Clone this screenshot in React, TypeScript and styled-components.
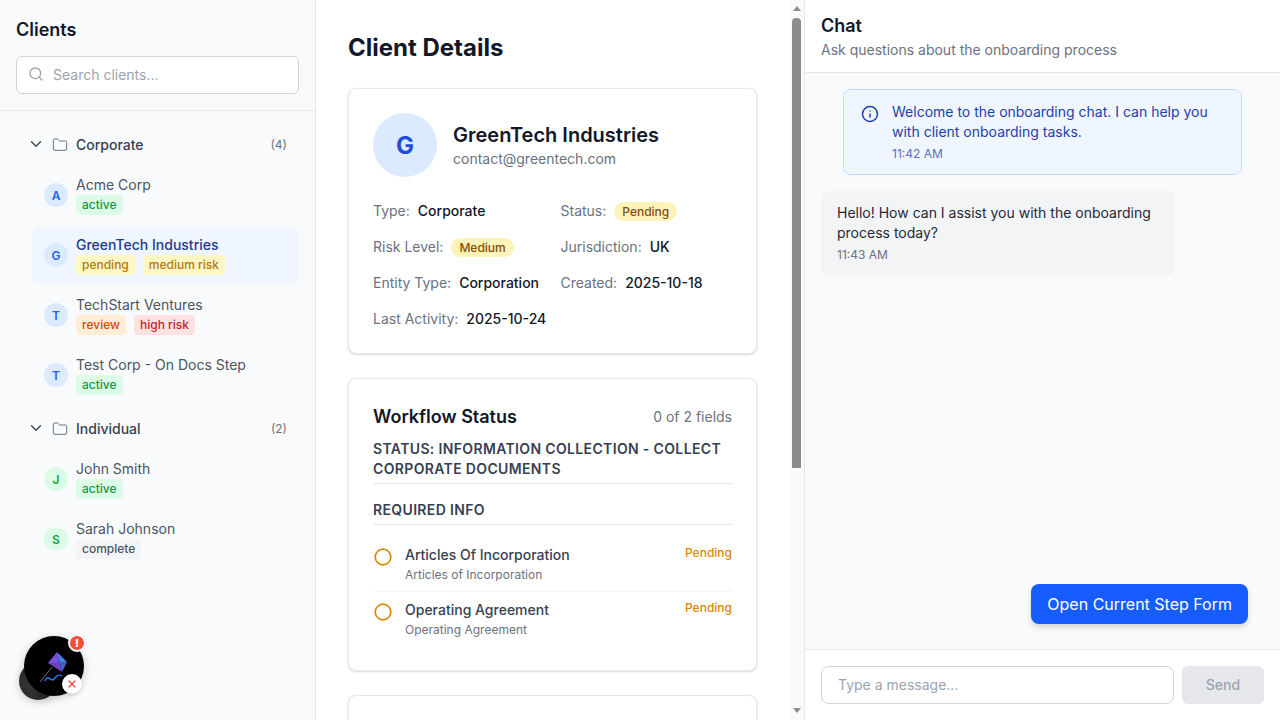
import styled, { createGlobalStyle } from 'styled-components';
import { ChevronDown, Folder, Info, Search, X } from 'lucide-react';

const GlobalStyle = createGlobalStyle`
  html, body {
    margin: 0;
    height: 100%;
    overflow: hidden;
  }
  body {
    font-family: Inter, "Liberation Sans", sans-serif;
    color: #111827;
    background: #fff;
  }
  * {
    box-sizing: border-box;
  }
`;

type Tone = 'green' | 'yellow' | 'orange' | 'red' | 'gray';

const tones: Record<Tone, { bg: string; fg: string }> = {
  green: { bg: '#dcfce7', fg: '#16963f' },
  yellow: { bg: '#fef7c3', fg: '#b4780f' },
  orange: { bg: '#ffedd5', fg: '#d9480f' },
  red: { bg: '#fee2e2', fg: '#c81e2e' },
  gray: { bg: '#f3f4f6', fg: '#4b5563' },
};

const Layout = styled.div`
  display: flex;
  width: 1280px;
  height: 720px;
  overflow: hidden;
`;

const Sidebar = styled.aside`
  position: relative;
  flex: 0 0 316px;
  background: #f9fafb;
  border-right: 1px solid #e5e7eb;
`;

const SidebarHead = styled.div`
  height: 111px;
  padding: 16px 16px 0;
  border-bottom: 1px solid #e5e7eb;
`;

const SidebarTitle = styled.h2`
  margin: 0 0 12px;
  font-size: 18px;
  line-height: 28px;
  font-weight: 600;
  color: #111827;
`;

const SearchBox = styled.div`
  display: flex;
  align-items: center;
  gap: 9px;
  height: 38px;
  width: 283px;
  padding: 0 11px 2px;
  background: #fff;
  border: 1px solid #d1d5db;
  border-radius: 6px;
  color: #9ca3af;
`;

const SearchInput = styled.input`
  flex: 1;
  min-width: 0;
  border: 0;
  outline: 0;
  padding: 0;
  background: transparent;
  font: 400 14px Inter, sans-serif;
  color: #111827;

  &::placeholder {
    color: #9ca3af;
    opacity: 1;
  }
`;

const Tree = styled.div`
  padding: 16px 16px 0;
`;

const Group = styled.section`
  margin-bottom: 8px;
`;

const GroupHead = styled.div`
  display: flex;
  align-items: center;
  height: 36px;
  margin-bottom: 4px;
  padding: 0 12px 2px 11px;
  color: #374151;
`;

const GroupName = styled.span`
  flex: 1;
  margin-left: 8px;
  font-size: 14px;
  font-weight: 500;
`;

const FolderIcon = styled(Folder)`
  margin: 2px 0 0 7px;
  color: #6b7280;
`;

const GroupCount = styled.span`
  font-size: 12px;
  color: #6b7280;
`;

const ClientRow = styled.div<{ $selected?: boolean }>`
  display: flex;
  align-items: center;
  gap: 8px;
  height: 56px;
  margin: 0 0 4px 16px;
  padding: 0 12px;
  border-radius: 6px;
  background: ${(p) => (p.$selected ? '#eff6ff' : 'transparent')};
`;

const Initial = styled.div<{ $green?: boolean }>`
  flex: 0 0 24px;
  display: flex;
  align-items: center;
  justify-content: center;
  height: 24px;
  border-radius: 50%;
  font-size: 12px;
  font-weight: 600;
  background: ${(p) => (p.$green ? '#dcfce7' : '#dbeafe')};
  color: ${(p) => (p.$green ? '#16a34a' : '#2563eb')};
`;

const ClientName = styled.div<{ $selected?: boolean }>`
  font-size: 14px;
  line-height: 20px;
  color: ${(p) => (p.$selected ? '#1e3a8a' : '#4b5563')};
  font-weight: ${(p) => (p.$selected ? 500 : 400)};
`;

const Tags = styled.div`
  display: flex;
  gap: 8px;
`;

const Tag = styled.span<{ $tone: Tone }>`
  height: 20px;
  padding: 0 6px;
  border-radius: 4px;
  font-size: 12px;
  line-height: 20px;
  font-weight: 500;
  background: ${(p) => tones[p.$tone].bg};
  color: ${(p) => tones[p.$tone].fg};
`;

const Widget = styled.div`
  position: absolute;
  left: 19px;
  top: 636px;
  width: 66px;
  height: 66px;
`;

const WidgetBack = styled.div`
  position: absolute;
  left: 0;
  bottom: 2px;
  width: 38px;
  height: 38px;
  border-radius: 50%;
  background: radial-gradient(circle at 35% 60%, #3a3a3a, #222 75%);
  box-shadow: 0 2px 8px rgba(0, 0, 0, 0.2);
`;

const WidgetFront = styled.div`
  position: absolute;
  left: 5px;
  top: 0;
  width: 60px;
  height: 60px;
  border-radius: 50%;
  background: #000;
  box-shadow: 0 2px 10px rgba(0, 0, 0, 0.2);
`;

const KiteDrawing = styled.svg`
  display: block;
`;

const AlertDot = styled.div`
  position: absolute;
  left: 49px;
  top: -2px;
  display: flex;
  align-items: center;
  justify-content: center;
  width: 18px;
  height: 18px;
  border-radius: 50%;
  border: 2px solid #fff;
  background: #f0513c;
  color: #fff;
  font-size: 11px;
  line-height: 1;
  font-weight: 800;
`;

const CloseDot = styled.div`
  position: absolute;
  left: 43px;
  top: 38px;
  display: flex;
  align-items: center;
  justify-content: center;
  width: 20px;
  height: 20px;
  border-radius: 50%;
  background: #fff;
  color: #ef4444;
  box-shadow: 0 1px 3px rgba(0, 0, 0, 0.2);
`;

const Main = styled.main`
  flex: 0 0 488px;
  display: flex;
  height: 720px;
  background: #fff;
`;

const MainScroll = styled.div`
  flex: 1;
  min-width: 0;
  padding: 32px;
  overflow: hidden;
`;

const ScrollRail = styled.div`
  flex: 0 0 15px;
  display: flex;
  flex-direction: column;
  align-items: center;
  padding: 6px 0 7px;
  background: #fafafa;
`;

const RailArrow = styled.div<{ $down?: boolean }>`
  width: 0;
  height: 0;
  border-left: 4.5px solid transparent;
  border-right: 4.5px solid transparent;
  border-bottom: ${(p) => (p.$down ? '0' : '5px solid #8c8c8c')};
  border-top: ${(p) => (p.$down ? '5px solid #8c8c8c' : '0')};
`;

const RailTrack = styled.div`
  flex: 1;
  padding-top: 7px;
`;

const RailThumb = styled.div`
  width: 9px;
  height: 450px;
  border-radius: 4px 4px 0 0;
  background: #8c8c8c;
`;

const PageTitle = styled.h1`
  margin: 0 0 24px;
  font-size: 24px;
  line-height: 32px;
  font-weight: 700;
  color: #111827;
`;

const Card = styled.div<{ $tall?: boolean }>`
  width: 409px;
  margin-bottom: 24px;
  padding: 24px;
  min-height: ${(p) => (p.$tall ? '330px' : '0')};
  background: #fff;
  border: 1px solid #e5e7eb;
  border-radius: 8px;
  box-shadow: 0 1px 3px rgba(0, 0, 0, 0.1), 0 1px 2px rgba(0, 0, 0, 0.06);
`;

const ClientHead = styled.div`
  display: flex;
  align-items: center;
  gap: 16px;
  margin-bottom: 24px;
`;

const BigInitial = styled.div`
  display: flex;
  align-items: center;
  justify-content: center;
  width: 64px;
  height: 64px;
  border-radius: 50%;
  background: #dbeafe;
  color: #1d4ed8;
  font-size: 24px;
  font-weight: 700;
`;

const ClientTitle = styled.div`
  margin-top: 1px;
  font-size: 20px;
  line-height: 27px;
  font-weight: 600;
  color: #111827;
`;

const ClientEmail = styled.div`
  font-size: 14px;
  line-height: 20px;
  color: #6b7280;
`;

const Fields = styled.div`
  display: grid;
  grid-template-columns: 171.5px 1fr;
  gap: 16px;
`;

const Field = styled.div`
  display: flex;
  align-items: center;
  gap: 8px;
  height: 20px;
  font-size: 14px;
  line-height: 20px;
  white-space: nowrap;
`;

const FieldLabel = styled.span`
  color: #6b7280;
`;

const FieldValue = styled.span`
  font-weight: 500;
  color: #111827;
`;

const Pill = styled.span`
  height: 19px;
  padding: 0 8px;
  border-radius: 10px;
  background: #fef3b8;
  color: #854d0e;
  font-size: 12px;
  line-height: 19px;
  font-weight: 500;
`;

const WorkflowHead = styled.div`
  display: flex;
  align-items: center;
  justify-content: space-between;
  margin-bottom: 8px;
`;

const WorkflowTitle = styled.h3`
  margin: 0;
  font-size: 18px;
  line-height: 28px;
  font-weight: 600;
  color: #111827;
`;

const FieldCount = styled.span`
  font-size: 14px;
  line-height: 20px;
  color: #6b7280;
`;

const SectionLabel = styled.div`
  padding-bottom: 4px;
  border-bottom: 1px solid #e5e7eb;
  font-size: 14px;
  line-height: 20px;
  font-weight: 600;
  color: #374151;
  letter-spacing: 0.35px;
  text-transform: uppercase;
`;

const RequiredLabel = styled(SectionLabel)`
  margin-top: 16px;
  margin-bottom: 12px;
`;

const Requirement = styled.div<{ $last?: boolean }>`
  display: flex;
  align-items: flex-start;
  gap: 12px;
  padding: 8px 0 6px;
  border-bottom: ${(p) => (p.$last ? '0' : '1px solid #f3f4f6')};
`;

const PendingRing = styled.div`
  flex: 0 0 20px;
  height: 20px;
  margin-top: 2px;
  border-radius: 50%;
`;

const RequirementText = styled.div`
  flex: 1;
`;

const RequirementName = styled.div`
  font-size: 14px;
  line-height: 20px;
  font-weight: 500;
  color: #374151;
`;

const RequirementNote = styled.div`
  font-size: 12px;
  line-height: 20px;
  color: #6b7280;
`;

const RequirementState = styled.span`
  font-size: 12px;
  line-height: 16px;
  font-weight: 500;
  color: #d68a06;
`;

const Chat = styled.section`
  position: relative;
  flex: 1;
  display: flex;
  flex-direction: column;
  height: 720px;
  background: #fff;
  border-left: 1px solid #e5e7eb;
`;

const ChatHead = styled.header`
  height: 73px;
  padding: 12px 16px 0;
  border-bottom: 1px solid #e5e7eb;
`;

const ChatTitle = styled.h2`
  margin: 0;
  font-size: 18px;
  line-height: 28px;
  font-weight: 600;
  color: #111827;
`;

const ChatSub = styled.p`
  margin: 0;
  font-size: 14px;
  line-height: 20px;
  color: #6b7280;
`;

const Messages = styled.div`
  flex: 1;
  display: flex;
  flex-direction: column;
  gap: 16px;
  padding: 16px;
  background: #f9fafb;
`;

const SystemMessage = styled.div`
  display: flex;
  gap: 13px;
  align-self: center;
  width: 399px;
  padding: 12px 16px 12px 17px;
  background: #eff6ff;
  border: 1px solid #bfdbfe;
  border-radius: 8px;
  color: #1e40af;
`;

const SystemIcon = styled(Info)`
  flex: 0 0 18px;
  margin-top: 3px;
  color: #1e40af;
`;

const MessageText = styled.div`
  font-size: 14px;
  line-height: 20px;
`;

const MessageTime = styled.div<{ $tint: string }>`
  margin-top: 4px;
  font-size: 12px;
  line-height: 16px;
  color: ${(p) => p.$tint};
`;

const Bubble = styled.div`
  width: 354px;
  padding: 12px 16px;
  background: #f3f4f6;
  border-radius: 8px;
  color: #1f2937;
`;

const FormButton = styled.button`
  position: absolute;
  right: 32px;
  top: 584px;
  height: 40px;
  padding: 0 16px;
  border: 0;
  border-radius: 8px;
  background: #175cff;
  color: #fff;
  font: 400 16px Inter, sans-serif;
  box-shadow: 0 4px 6px rgba(0, 0, 0, 0.1), 0 2px 4px rgba(0, 0, 0, 0.06);
`;

const Composer = styled.footer`
  display: flex;
  gap: 8px;
  height: 71px;
  padding: 16px;
  background: #fff;
  border-top: 1px solid #e5e7eb;
`;

const MessageInput = styled.input`
  flex: 1;
  min-width: 0;
  height: 38px;
  padding: 0 16px 2px;
  border: 1px solid #d1d5db;
  border-radius: 8px;
  outline: 0;
  font: 400 14px Inter, sans-serif;

  &::placeholder {
    color: #9ca3af;
    opacity: 1;
  }
`;

const SendButton = styled.button`
  width: 82px;
  height: 38px;
  padding: 0 0 2px;
  border: 0;
  border-radius: 6px;
  background: #e5e7eb;
  color: #9ca3af;
  font: 500 14px Inter, sans-serif;
`;

interface ClientItem {
  name: string;
  green?: boolean;
  selected?: boolean;
  tags: { label: string; tone: Tone }[];
}

const corporate: ClientItem[] = [
  { name: 'Acme Corp', tags: [{ label: 'active', tone: 'green' }] },
  {
    name: 'GreenTech Industries',
    selected: true,
    tags: [
      { label: 'pending', tone: 'yellow' },
      { label: 'medium risk', tone: 'yellow' },
    ],
  },
  {
    name: 'TechStart Ventures',
    tags: [
      { label: 'review', tone: 'orange' },
      { label: 'high risk', tone: 'red' },
    ],
  },
  { name: 'Test Corp - On Docs Step', tags: [{ label: 'active', tone: 'green' }] },
];

const individual: ClientItem[] = [
  { name: 'John Smith', green: true, tags: [{ label: 'active', tone: 'green' }] },
  { name: 'Sarah Johnson', green: true, tags: [{ label: 'complete', tone: 'gray' }] },
];

const ClientList = ({ title, items }: { title: string; items: ClientItem[] }) => (
  <Group>
    <GroupHead>
      <ChevronDown size={18} strokeWidth={1.75} />
      <FolderIcon size={16} strokeWidth={1.5} />
      <GroupName>{title}</GroupName>
      <GroupCount>({items.length})</GroupCount>
    </GroupHead>
    {items.map((client) => (
      <ClientRow key={client.name} $selected={client.selected}>
        <Initial $green={client.green}>{client.name[0]}</Initial>
        <div>
          <ClientName $selected={client.selected}>{client.name}</ClientName>
          <Tags>
            {client.tags.map((tag) => (
              <Tag key={tag.label} $tone={tag.tone}>
                {tag.label}
              </Tag>
            ))}
          </Tags>
        </div>
      </ClientRow>
    ))}
  </Group>
);

const Kite = () => (
  <KiteDrawing width="60" height="60" viewBox="0 0 60 60">
    <path d="M33 16 L43 26 L36 27 Z" fill="#3b8ae0" />
    <path d="M33 16 L24 27 L36 27 Z" fill="#7c4ddb" />
    <path d="M24 27 L38 36 L36 27 Z" fill="#6a3fc0" />
    <path d="M43 26 L38 36 L36 27 Z" fill="#4a60d0" />
    <path d="M28 31 L16 46" stroke="#8a8a8a" strokeWidth="0.8" fill="none" />
    <path d="M21 45 C24 37 27 47 30 43 S35 38 38 40" stroke="#1c7ff0" strokeWidth="1.5" fill="none" />
  </KiteDrawing>
);

const RequirementItem = ({ name, note, last }: { name: string; note: string; last?: boolean }) => (
  <Requirement $last={last}>
    <PendingRing>
      <svg width="20" height="20" viewBox="0 0 20 20">
        <circle cx="10" cy="10" r="7.8" fill="none" stroke="#d68a06" strokeWidth="1.7" />
      </svg>
    </PendingRing>
    <RequirementText>
      <RequirementName>{name}</RequirementName>
      <RequirementNote>{note}</RequirementNote>
    </RequirementText>
    <RequirementState>Pending</RequirementState>
  </Requirement>
);

export default function App() {
  return (
    <Layout>
      <GlobalStyle />
      <Sidebar>
        <SidebarHead>
          <SidebarTitle>Clients</SidebarTitle>
          <SearchBox>
            <Search size={16} />
            <SearchInput placeholder="Search clients..." />
          </SearchBox>
        </SidebarHead>
        <Tree>
          <ClientList title="Corporate" items={corporate} />
          <ClientList title="Individual" items={individual} />
        </Tree>
        <Widget>
          <WidgetBack />
          <WidgetFront>
            <Kite />
          </WidgetFront>
          <AlertDot>!</AlertDot>
          <CloseDot>
            <X size={12} strokeWidth={2.5} />
          </CloseDot>
        </Widget>
      </Sidebar>
      <Main>
        <MainScroll>
          <PageTitle>Client Details</PageTitle>
          <Card>
            <ClientHead>
              <BigInitial>G</BigInitial>
              <div>
                <ClientTitle>GreenTech Industries</ClientTitle>
                <ClientEmail>contact@greentech.com</ClientEmail>
              </div>
            </ClientHead>
            <Fields>
              <Field>
                <FieldLabel>Type:</FieldLabel>
                <FieldValue>Corporate</FieldValue>
              </Field>
              <Field>
                <FieldLabel>Status:</FieldLabel>
                <Pill>Pending</Pill>
              </Field>
              <Field>
                <FieldLabel>Risk Level:</FieldLabel>
                <Pill>Medium</Pill>
              </Field>
              <Field>
                <FieldLabel>Jurisdiction:</FieldLabel>
                <FieldValue>UK</FieldValue>
              </Field>
              <Field>
                <FieldLabel>Entity Type:</FieldLabel>
                <FieldValue>Corporation</FieldValue>
              </Field>
              <Field>
                <FieldLabel>Created:</FieldLabel>
                <FieldValue>2025-10-18</FieldValue>
              </Field>
              <Field>
                <FieldLabel>Last Activity:</FieldLabel>
                <FieldValue>2025-10-24</FieldValue>
              </Field>
            </Fields>
          </Card>
          <Card>
            <WorkflowHead>
              <WorkflowTitle>Workflow Status</WorkflowTitle>
              <FieldCount>0 of 2 fields</FieldCount>
            </WorkflowHead>
            <SectionLabel>Status: Information Collection - Collect Corporate Documents</SectionLabel>
            <RequiredLabel>Required Info</RequiredLabel>
            <RequirementItem name="Articles Of Incorporation" note="Articles of Incorporation" />
            <RequirementItem name="Operating Agreement" note="Operating Agreement" last />
          </Card>
          <Card $tall />
        </MainScroll>
        <ScrollRail>
          <RailArrow />
          <RailTrack>
            <RailThumb />
          </RailTrack>
          <RailArrow $down />
        </ScrollRail>
      </Main>
      <Chat>
        <ChatHead>
          <ChatTitle>Chat</ChatTitle>
          <ChatSub>Ask questions about the onboarding process</ChatSub>
        </ChatHead>
        <Messages>
          <SystemMessage>
            <SystemIcon size={18} />
            <div>
              <MessageText>Welcome to the onboarding chat. I can help you with client onboarding tasks.</MessageText>
              <MessageTime $tint="#5b6fc4">11:42 AM</MessageTime>
            </div>
          </SystemMessage>
          <Bubble>
            <MessageText>Hello! How can I assist you with the onboarding process today?</MessageText>
            <MessageTime $tint="#6b7280">11:43 AM</MessageTime>
          </Bubble>
        </Messages>
        <FormButton>Open Current Step Form</FormButton>
        <Composer>
          <MessageInput placeholder="Type a message..." />
          <SendButton>Send</SendButton>
        </Composer>
      </Chat>
    </Layout>
  );
}
